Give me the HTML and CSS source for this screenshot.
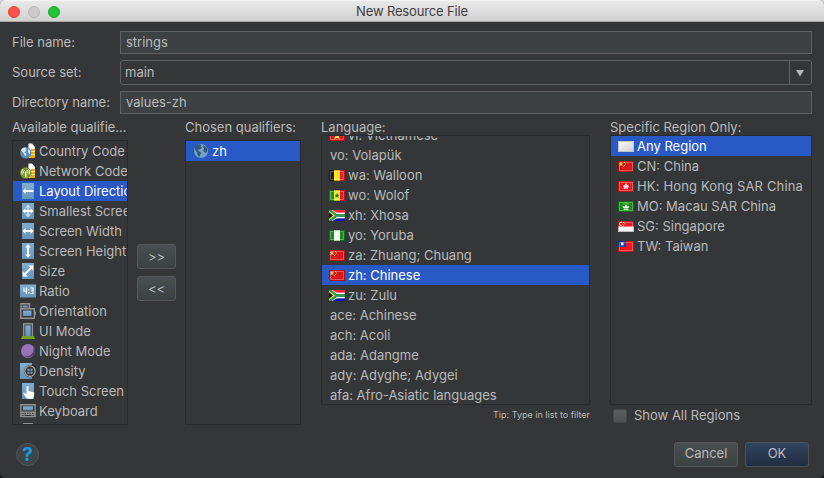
FILE: index.html
```html
<!DOCTYPE html>
<html lang="en">
<head>
<meta charset="utf-8">
<title>New Resource File</title>
<link rel="stylesheet" href="styles.css">
</head>
<body>
<svg class="defs" width="0" height="0">
  <defs>
    <linearGradient id="blue" x1="0" y1="0" x2="0" y2="1"><stop offset="0" stop-color="#81add0"/><stop offset="1" stop-color="#6595bb"/></linearGradient>
    <linearGradient id="white" x1="0" y1="0" x2="1" y2="1"><stop offset="0" stop-color="#fff"/><stop offset="1" stop-color="#ccc"/></linearGradient>
    <symbol id="tile" viewBox="0 0 16 16"><path d="M2 0h12v16H2z" fill="url(#blue)"/></symbol>
    <symbol id="page" viewBox="0 0 16 16"><path d="M8.500.5h3.500L15 4v11H8z" fill="#fff"/><path d="M11 6h4v9h-5z" fill="#e0ac10"/><path d="M10 8.500h5M10 11.500h5" stroke="#fff3b0" stroke-width=".8"/></symbol>
    <symbol id="globe" viewBox="0 0 16 16"><circle cx="8" cy="8" r="7" fill="#72a3ca"/><path d="M2 4q2-2.800 5-2.700l1.500 1-1 1.200 1.500.8-1.800 2-1.700.2-.2 1.600 1.900.8 1.100 1.200-1.200 2-.8 2-1.600-1.600-.3-2.600L2.200 7zM10.500 2.200l2.800 2 1 2.500-.8 3-2-.2-1.300-2 1-1.800-1-1.500z" fill="#34577a"/></symbol>
    <symbol id="country" viewBox="0 0 16 16"><use href="#page"/><circle cx="5.800" cy="9.900" r="5.700" fill="#5d8eb8"/><path d="M1 7q1.500-2.500 4-2.700l1.600 1.200L5.400 7l1.200.8-2.400 1.500 2.200 1.400-1 3.100-1.600-3.300zM8.200 5.700l2 2-.4 3.500-1.600-1.400z" fill="#d9e6ef"/></symbol>
    <symbol id="network" viewBox="0 0 16 16"><use href="#page"/><circle cx="5.800" cy="9.900" r="5.700" fill="#789b2b"/><g fill="none" stroke="#fff"><path d="M5.700 8.500v6" stroke-width="1.400"/><path d="M3.800 10.200q-1-2 .5-3M7.600 10.200q1-2-.5-3M2.300 11.400q-1.500-3.500.8-5.400M9.100 11.400q1.500-3.500-.8-5.400" stroke-width=".9"/></g></symbol>
    <symbol id="direction" viewBox="0 0 16 16"><use href="#tile"/><path d="M6 5L2.700 8 6 11V9h7.500V7H6z" fill="#fff"/></symbol>
    <symbol id="width" viewBox="0 0 16 16"><use href="#tile"/><path d="M5.500 5l-3 3 3 3V9h5v2l3-3-3-3v2h-5z" fill="#fff"/></symbol>
    <symbol id="height" viewBox="0 0 16 16"><use href="#tile"/><path d="M5 4.500l3-3.200 3 3.200H9v7h2l-3 3.200-3-3.200h2v-7z" fill="#fff"/></symbol>
    <symbol id="smallest" viewBox="0 0 16 16"><use href="#tile"/><path d="M5 4.800l3-3.200 3 3.200H9v6.400h2l-3 3.200-3-3.200h2V4.800z" fill="#c8dbe8"/><path d="M5.500 5.200L2.500 8l3 2.800V9h5v1.800l3-2.800-3-2.800V7h-5z" fill="#fff"/></symbol>
    <symbol id="size" viewBox="0 0 16 16"><use href="#tile"/><path d="M8 2.500h5.300v5.300l-1.900-1.900-5.500 5.700 2 2H2.700V8.200l1.900 1.900 5.500-5.600z" fill="#fff"/></symbol>
    <symbol id="ratio" viewBox="0 0 16 16"><path d="M0 1.500h16v13H0z" fill="url(#blue)"/><path d="M4 4.500v3.800h3M6.500 4.500v6.500M10.500 5h2.500v5.500h-2.500M11 7.800h2M8.700 6v1.500M8.700 9v1.500" fill="none" stroke="#fff" stroke-width="1.100"/></symbol>
    <symbol id="orientation" viewBox="0 0 16 16"><path d="M1 6V.7h8.500V5" fill="#3a4046" stroke="#929292" stroke-width="1.400"/><path d="M2.700 2.500h5v2h-5z" fill="#6e9fc6"/><path d="M.8 5.700h13.500v9.500H.8z" fill="#343638" stroke="#929292" stroke-width="1.500"/><path d="M3 7.500h8.500V13H3z" fill="url(#blue)"/><path d="M15.300 8.500v3.500" stroke="#929292" stroke-width="1.300"/></symbol>
    <symbol id="uimode" viewBox="0 0 16 16"><path d="M3.700 13V.8h8.700V13" fill="#34383b" stroke="#929292" stroke-width="1.400"/><path d="M5.300 2.300h5.400V13H5.300z" fill="url(#blue)"/><path d="M2 13h12l1 3H1z" fill="#789f20"/></symbol>
    <symbol id="night" viewBox="0 0 16 16"><circle cx="8" cy="8" r="7" fill="#9773ba"/><path d="M13.300 3.200A6 6 0 0 1 3.500 12.200q5 2.500 8-1 3-3.500 1.800-8z" fill="#514061"/></symbol>
    <symbol id="density" viewBox="0 0 16 16"><path d="M0 0h12v16H0z" fill="url(#blue)"/><circle cx="10" cy="8.200" r="5.600" fill="#333" stroke="#333"/><circle cx="10" cy="8.200" r="5.200" fill="#333" stroke="#aaa" stroke-width="1.200"/><path d="M7.500 5.700h2v2h-2zM10.500 5.700h2v2h-2zM7.500 8.700h2v2h-2zM10.500 8.700h2v2h-2z" fill="#79a9ce"/></symbol>
    <symbol id="touch" viewBox="0 0 16 16"><path d="M2 0h12v16H2z" fill="url(#blue)"/><path d="M6.500 3.500q1.300-1 2 0V8l5.300 1.200q.7.300.4 2.500L13 15.700H7L3.500 11q-.5-1.500 1-1.200l2 1.400z" fill="#fff"/></symbol>
    <symbol id="keyboard" viewBox="0 0 16 16"><path d="M.9 8.500V1.700h14.200v6.800" fill="#35393c" stroke="#929292" stroke-width="1.400"/><path d="M3 3.300h10v4H3z" fill="url(#blue)"/><path d="M.2 8.500h15.600v5.800H.2z" fill="#929292"/><path d="M2 10.400h12" stroke="#333" stroke-dasharray="1.500 1"/><path d="M2 12.500h12" stroke="#333" stroke-dasharray="1.500 1 7 1"/></symbol>
    <symbol id="partial" viewBox="0 0 16 16"><path d="M3 0h10v14H3z" fill="#929292"/></symbol>

    <symbol id="edge" viewBox="0 0 16 11"><path d="M1.500 1.500h13v8h-13z" fill="none" stroke="#fff" stroke-opacity=".28"/><path d="M.5.500h15v10H.5z" fill="none" stroke="#000" stroke-opacity=".22"/></symbol>
    <symbol id="vi" viewBox="0 0 16 11"><path d="M0 0h16v11H0z" fill="#e5121a"/><path d="M8 1l1.200 3h3L9.800 6l1 3.500L8 7.500 5.200 9.500l1-3.500-2.400-2h3z" fill="#ffe83a"/><use href="#edge"/></symbol>
    <symbol id="be" viewBox="0 0 16 11"><path d="M0 0h5.300v11H0z" fill="#1e1e1e"/><path d="M5 0h6v11H5z" fill="#ffe51b"/><path d="M11 0h5v11h-5z" fill="#ee1d22"/><use href="#edge"/></symbol>
    <symbol id="sn" viewBox="0 0 16 11"><path d="M0 0h5.300v11H0z" fill="#229328"/><path d="M5 0h6v11H5z" fill="#fbe535"/><path d="M11 0h5v11h-5z" fill="#e81820"/><path d="M8 3l.8 1.700h1.700L9.200 6l.6 1.800L8 6.900l-1.800.9.600-1.800-1.300-1.300h1.700z" fill="#1e8228"/><use href="#edge"/></symbol>
    <symbol id="za" viewBox="0 0 16 11"><path d="M0 0h16v4H0z" fill="#e9262d"/><path d="M0 7h16v4H0z" fill="#0917a0"/><path d="M3 2.700h13v5.600H3z" fill="#fff"/><path d="M0 0h2.500l5.500 4H16v3H8L2.500 11H0z" fill="#2f9a56"/><path d="M0 1l6 4.500L0 10z" fill="#f7df48"/><path d="M0 2.300l4 3.200-4 3.200z" fill="#151515"/><path d="M3 0l5 3.400h8M3 11l5-3.400h8" fill="none" stroke="#fff" stroke-width=".8"/></symbol>
    <symbol id="ng" viewBox="0 0 16 11"><path d="M0 0h16v11H0z" fill="#168c1b"/><path d="M5 0h6v11H5z" fill="#f7f7f7"/><use href="#edge"/></symbol>
    <symbol id="cn" viewBox="0 0 16 11"><path d="M0 0h16v11H0z" fill="#d9171b"/><path d="M3 1l.6 1.400H5L4 3.400l.4 1.500L3 4.100l-1.400.8L2 3.400 1 2.400h1.400z" fill="#ffed38"/><path d="M6 1h1v1H6zM7 2.500h1v1H7zM6 4h1v1H6zM5 5h1v1H5z" fill="#f9bd29"/><use href="#edge"/></symbol>
    <symbol id="any" viewBox="0 0 16 11"><path d="M0 0h16v11H0z" fill="url(#white)"/><path d="M.5.500h15v10H.5z" fill="none" stroke="#c4c4c4"/></symbol>
    <symbol id="hk" viewBox="0 0 16 11"><path d="M0 0h16v11H0z" fill="#e9191e"/><path d="M8 5.500L7.200 3h1.600zM8 5.500l2-1.300.6 1.500zM8 5.500l2.200 1.300-1.200 1.200zM8 5.500L7 8 5.800 7zM8 5.500l-2.600.2.600-1.500z" fill="#fff" stroke="#fff" stroke-width=".5"/><use href="#edge"/></symbol>
    <symbol id="mo" viewBox="0 0 16 11"><path d="M0 0h16v11H0z" fill="#128b18"/><path d="M8 3l1.200 2.500 2.300-.5q-.5 2-2 2.500h-3q-1.500-.5-2-2.500l2.300.5zM5.500 8.200h5v.9h-5z" fill="#fff"/><path d="M7.500 1.500h1v1h-1zM5.500 2.500h1v1h-1zM9.500 2.500h1v1h-1z" fill="#f5e34b"/><use href="#edge"/></symbol>
    <symbol id="sg" viewBox="0 0 16 11"><path d="M0 0h16v6H0z" fill="#e61921"/><path d="M0 5.500h16V11H0z" fill="#f3f3f3"/><path d="M3.800 1.200a1.700 1.700 0 1 0 0 3.200M5 1.500h.8M6.500 2.700h.8M5 4h.8" fill="none" stroke="#fff"/><use href="#edge"/></symbol>
    <symbol id="tw" viewBox="0 0 16 11"><path d="M0 0h16v11H0z" fill="#ed151b"/><path d="M0 0h8v6H0z" fill="#173cae"/><path d="M3 1.500h2.500v2.800H3z" fill="#fff"/><use href="#edge"/></symbol>
  </defs>
</svg>
<div class="window">
  <header class="titlebar">
    <div class="lights"><i class="light close"></i><i class="light min"></i><i class="light max"></i></div>
    <h1 class="title">New Resource File</h1>
  </header>
  <main class="content">
    <div class="form">
      <label class="form-row"><span class="name">File name:</span><span class="field">strings</span></label>
      <label class="form-row"><span class="name">Source set:</span><span class="field combo"><span class="value">main</span><span class="arrow"><svg width="8" height="7" viewBox="0 0 8 7"><path d="M0 0h8L4 6.500z" fill="#b4b6b8"/></svg></span></span></label>
      <label class="form-row"><span class="name">Directory name:</span><span class="field">values-zh</span></label>
    </div>
    <div class="columns">
      <section class="col available">
        <h2 class="heading">Available qualifie...</h2>
        <ul class="list">
          <li><svg class="icon"><use href="#country"/></svg>Country Code</li>
          <li><svg class="icon"><use href="#network"/></svg>Network Code</li>
          <li class="selected"><svg class="icon"><use href="#direction"/></svg>Layout Direction</li>
          <li><svg class="icon"><use href="#smallest"/></svg>Smallest Screen Width</li>
          <li><svg class="icon"><use href="#width"/></svg>Screen Width</li>
          <li><svg class="icon"><use href="#height"/></svg>Screen Height</li>
          <li><svg class="icon"><use href="#size"/></svg>Size</li>
          <li><svg class="icon"><use href="#ratio"/></svg>Ratio</li>
          <li><svg class="icon"><use href="#orientation"/></svg>Orientation</li>
          <li><svg class="icon"><use href="#uimode"/></svg>UI Mode</li>
          <li><svg class="icon"><use href="#night"/></svg>Night Mode</li>
          <li><svg class="icon"><use href="#density"/></svg>Density</li>
          <li><svg class="icon"><use href="#touch"/></svg>Touch Screen</li>
          <li><svg class="icon"><use href="#keyboard"/></svg>Keyboard</li>
          <li><svg class="icon"><use href="#partial"/></svg></li>
        </ul>
      </section>
      <div class="movers"><button class="btn mover">&gt;&gt;</button><button class="btn mover">&lt;&lt;</button></div>
      <section class="col chosen">
        <h2 class="heading">Chosen qualifiers:</h2>
        <ul class="list"><li class="selected"><svg class="icon"><use href="#globe"/></svg>zh</li></ul>
      </section>
      <section class="col language">
        <h2 class="heading">Language:</h2>
        <ul class="list">
          <li><svg class="flag"><use href="#vi"/></svg>vi: Vietnamese</li>
          <li class="plain">vo: Volapük</li>
          <li><svg class="flag"><use href="#be"/></svg>wa: Walloon</li>
          <li><svg class="flag"><use href="#sn"/></svg>wo: Wolof</li>
          <li><svg class="flag"><use href="#za"/></svg>xh: Xhosa</li>
          <li><svg class="flag"><use href="#ng"/></svg>yo: Yoruba</li>
          <li><svg class="flag"><use href="#cn"/></svg>za: Zhuang; Chuang</li>
          <li class="selected"><svg class="flag"><use href="#cn"/></svg>zh: Chinese</li>
          <li><svg class="flag"><use href="#za"/></svg>zu: Zulu</li>
          <li class="plain">ace: Achinese</li>
          <li class="plain">ach: Acoli</li>
          <li class="plain">ada: Adangme</li>
          <li class="plain">ady: Adyghe; Adygei</li>
          <li class="plain">afa: Afro-Asiatic languages</li>
        </ul>
        <p class="tip">Tip: Type in list to filter</p>
      </section>
      <section class="col region">
        <h2 class="heading">Specific Region Only:</h2>
        <ul class="list">
          <li class="selected"><svg class="flag"><use href="#any"/></svg>Any Region</li>
          <li><svg class="flag"><use href="#cn"/></svg>CN: China</li>
          <li class="wide"><svg class="flag"><use href="#hk"/></svg>HK: Hong Kong SAR China</li>
          <li><svg class="flag"><use href="#mo"/></svg>MO: Macau SAR China</li>
          <li><svg class="flag"><use href="#sg"/></svg>SG: Singapore</li>
          <li><svg class="flag"><use href="#tw"/></svg>TW: Taiwan</li>
        </ul>
        <label class="check"><i class="box"></i>Show All Regions</label>
      </section>
    </div>
    <footer class="footer">
      <button class="help">?</button>
      <div class="actions"><button class="btn">Cancel</button><button class="btn primary">OK</button></div>
    </footer>
  </main>
</div>
</body>
</html>
```
FILE: styles.css
```css
* { box-sizing: border-box; }
body {
  margin: 0;
  background: linear-gradient(#dcdcdc 50%, #171718 50%);
  color: #b9babb;
  font: 13px/20px Inter, Roboto, sans-serif;
  overflow: hidden;
}
.defs { position: absolute; }
h1, h2, p, ul { margin: 0; padding: 0; font-size: inherit; font-weight: 400; list-style: none; }
.window {
  width: 824px;
  height: 478px;
  border-radius: 5px;
  background: #353638;
  overflow: hidden;
}
.titlebar {
  height: 22px;
  display: grid;
  grid-template-columns: 120px 1fr 120px;
  background: linear-gradient(#e9e9e9, #d1d1d1);
  border-top: 1px solid #f5f5f5;
  border-bottom: 1px solid #aaa;
}
.lights { display: flex; align-items: center; gap: 8px; padding-left: 8px; }
.light { width: 12px; height: 12px; border-radius: 50%; border: 1px solid; }
.close { background: #ff514c; border-color: #e2403b; }
.min { background: #cacaca; border-color: #b5b5b5; }
.max { background: #22c436; border-color: #17a928; }
.title { color: #3e3e3e; text-align: center; line-height: 21px; letter-spacing: -.15px; }
.content { padding: 9px 12px 0; }
.form { display: flex; flex-direction: column; gap: 6px; }
.form-row { display: flex; align-items: center; }
.name { width: 108px; padding-bottom: 2px; white-space: nowrap; }
.field {
  flex: 1;
  height: 23px;
  display: flex;
  align-items: center;
  padding: 0 0 2px 5px;
  background: #3d4142;
  border: 1px solid #5e6061;
}
.combo { height: 25px; padding: 0 0 0 4px; background: transparent; border-radius: 3px; justify-content: space-between; }
.value { padding-bottom: 2px; }
.arrow { width: 22px; height: 23px; padding: 1px 1px 0 0; border-left: 1px solid #5e6061; display: grid; place-items: center; }
.columns { display: flex; height: 311px; padding-top: 3px; }
.col { display: flex; flex-direction: column; }
.heading { height: 18px; line-height: 21px; white-space: nowrap; }
.list { flex: none; border: 1px solid #2a2b2c; overflow: hidden; }
.list li { height: 20px; display: flex; align-items: center; white-space: nowrap; padding-left: 7px; }
.list .selected { background: #2859c5; color: #fff; }
.icon { width: 16px; height: 16px; flex: none; margin-right: 3px; }
.flag { width: 16px; height: 11px; flex: none; margin-right: 3px; }
.available, .chosen { width: 116px; }
.available .heading, .chosen .heading { height: 23px; }
.available .list, .chosen .list { height: 285px; }
.movers { width: 57px; padding: 127px 0 0 9px; display: flex; flex-direction: column; gap: 7px; }
.language { width: 269px; margin-left: 20px; }
.language .list, .region .list { height: 270px; }
.language li:first-child { margin-top: -11px; }
.list .plain { padding-left: 8px; }
.list .wide { letter-spacing: .15px; }
.region { width: 202px; margin-left: 20px; }
.tip { font-size: 9px; line-height: 20px; text-align: right; }
.check { display: flex; align-items: center; gap: 7px; padding-left: 3px; line-height: 21px; }
.box { width: 14px; height: 14px; background: linear-gradient(#5d5d5d, #505050); border: 1px solid #454647; border-radius: 2px; }
.btn {
  width: 64px;
  height: 25px;
  padding: 0 0 2px;
  font: inherit;
  line-height: 21px;
  color: #b9babb;
  background: linear-gradient(#494e50, #3c4142);
  border: 1px solid #55585a;
  border-radius: 3px;
}
.mover { width: 39px; padding: 0; line-height: 22px; }
.primary { background: linear-gradient(#304461, #212d40); border-color: #4b5359; }
.footer { display: flex; justify-content: space-between; padding: 17px 3px 0 4px; }
.actions { display: flex; gap: 7px; }
.help {
  width: 23px;
  height: 23px;
  margin-top: 1px;
  padding: 0;
  border: 1px solid #55585a;
  border-radius: 50%;
  background: #3f4446;
  color: #159be6;
  font: 700 19px/21px Inter, sans-serif;
}
```
